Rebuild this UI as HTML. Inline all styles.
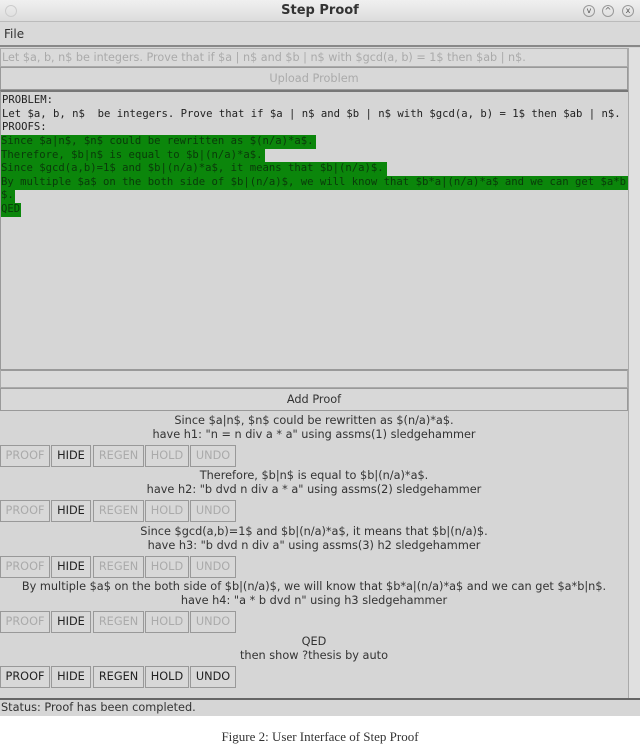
<!DOCTYPE html>
<html><head><style>
*{margin:0;padding:0;box-sizing:border-box}
body{width:640px;height:733px;background:#fff;position:relative;overflow:hidden;font-family:"DejaVu Sans","Liberation Sans",sans-serif;font-size:11.3px;color:#333}
.a{position:absolute}
.title{left:0;top:0;width:640px;height:22px;background:linear-gradient(#f0f0f0,#dcdcdc);border-bottom:1px solid #bbb;text-align:center;font-weight:bold;font-size:13px;line-height:22px;color:#333}
.menu{left:0;top:22px;width:640px;height:25px;background:#d9d9d9;border-bottom:2px solid #888;line-height:24px;padding-left:4px;font-size:12px}
.main{left:0;top:47px;width:640px;height:653px;background:#d6d6d6}
.field{left:0;height:19px;width:628px;border:1px solid #aaa;background:#dadada}
.btn{border:1px solid #999;background:#d8d8d8;text-align:center;color:#333}
.mono{font-family:"DejaVu Sans Mono","Liberation Mono",monospace;font-size:10.6px;line-height:13.5px;white-space:pre;color:#222;overflow:hidden}
.g{background:#0b860b;color:#0a3a0a}
.c{left:0;width:628px;text-align:center;line-height:14px;color:#333}
.bt{position:absolute;height:22px;border:1px solid #999;background:#d8d8d8;text-align:center;line-height:20px;color:#222}
.dis{color:#aaa}
.circ{width:12px;height:12px;border:1px solid #999;border-radius:50%;font-size:8px;line-height:10px;text-align:center;color:#555;top:5px}
</style></head><body>
<div class="a title">Step Proof</div>
<div class="a circ" style="left:5px;border-color:#ccc"></div>
<div class="a circ" style="left:583px">v</div>
<div class="a circ" style="left:602px">^</div>
<div class="a circ" style="left:622px">x</div>
<div class="a menu">File</div>
<div class="a main"></div>
<div class="a field" style="top:48px;color:#aaa;line-height:17px;padding-left:1px;font-size:11.2px;white-space:nowrap;overflow:hidden">Let $a, b, n$  be integers. Prove that if $a | n$ and $b | n$ with $gcd(a, b) = 1$ then $ab | n$.</div>
<div class="a btn dis" style="left:0;top:67px;width:628px;height:23px;line-height:21px">Upload Problem</div>
<div class="a" style="left:0;top:90px;width:628px;height:279px;border-top:2px solid #777;border-left:1px solid #999;background:#d6d6d6"></div>
<div class="a mono" style="left:2px;top:94px;width:626px">PROBLEM:
Let $a, b, n$  be integers. Prove that if $a | n$ and $b | n$ with $gcd(a, b) = 1$ then $ab | n$.
PROOFS:</div>
<div class="a mono g" style="left:1px;top:135px;width:315px">Since $a|n$, $n$ could be rewritten as $(n/a)*a$.</div>
<div class="a mono g" style="left:1px;top:149px;width:264px">Therefore, $b|n$ is equal to $b|(n/a)*a$.</div>
<div class="a mono g" style="left:1px;top:162px;width:386px">Since $gcd(a,b)=1$ and $b|(n/a)*a$, it means that $b|(n/a)$.</div>
<div class="a mono g" style="left:1px;top:176px;width:627px">By multiple $a$ on the both side of $b|(n/a)$, we will know that $b*a|(n/a)*a$ and we can get $a*b</div>
<div class="a mono g" style="left:1px;top:189px;width:14px">$.</div>
<div class="a mono g" style="left:1px;top:203px;width:20px">QED</div>
<div class="a field" style="top:369px;height:19px;border-top:2px solid #999"></div>
<div class="a btn" style="left:0;top:388px;width:628px;height:23px;line-height:21px">Add Proof</div>
<div class="a" style="left:628px;top:48px;width:12px;height:652px;background:#e0e0e0;border-left:1px solid #aaa"></div>

<div class="a c" style="top:414px">Since $a|n$, $n$ could be rewritten as $(n/a)*a$.<br>have h1: "n = n div a * a" using assms(1) sledgehammer</div>
<div class="a" style="top:445px;left:0;width:640px">
<div class="bt dis" style="left:0;width:50px">PROOF</div><div class="bt" style="left:51px;width:40px">HIDE</div><div class="bt dis" style="left:93px;width:51px">REGEN</div><div class="bt dis" style="left:145px;width:44px">HOLD</div><div class="bt dis" style="left:190px;width:46px">UNDO</div></div>

<div class="a c" style="top:469px">Therefore, $b|n$ is equal to $b|(n/a)*a$.<br>have h2: "b dvd n div a * a" using assms(2) sledgehammer</div>
<div class="a" style="top:500px;left:0;width:640px">
<div class="bt dis" style="left:0;width:50px">PROOF</div><div class="bt" style="left:51px;width:40px">HIDE</div><div class="bt dis" style="left:93px;width:51px">REGEN</div><div class="bt dis" style="left:145px;width:44px">HOLD</div><div class="bt dis" style="left:190px;width:46px">UNDO</div></div>

<div class="a c" style="top:525px">Since $gcd(a,b)=1$ and $b|(n/a)*a$, it means that $b|(n/a)$.<br>have h3: "b dvd n div a" using assms(3) h2 sledgehammer</div>
<div class="a" style="top:556px;left:0;width:640px">
<div class="bt dis" style="left:0;width:50px">PROOF</div><div class="bt" style="left:51px;width:40px">HIDE</div><div class="bt dis" style="left:93px;width:51px">REGEN</div><div class="bt dis" style="left:145px;width:44px">HOLD</div><div class="bt dis" style="left:190px;width:46px">UNDO</div></div>

<div class="a c" style="top:580px">By multiple $a$ on the both side of $b|(n/a)$, we will know that $b*a|(n/a)*a$ and we can get $a*b|n$.<br>have h4: "a * b dvd n" using h3 sledgehammer</div>
<div class="a" style="top:611px;left:0;width:640px">
<div class="bt dis" style="left:0;width:50px">PROOF</div><div class="bt" style="left:51px;width:40px">HIDE</div><div class="bt dis" style="left:93px;width:51px">REGEN</div><div class="bt dis" style="left:145px;width:44px">HOLD</div><div class="bt dis" style="left:190px;width:46px">UNDO</div></div>

<div class="a c" style="top:635px">QED<br>then show ?thesis by auto</div>
<div class="a" style="top:666px;left:0;width:640px">
<div class="bt" style="left:0;width:50px">PROOF</div><div class="bt" style="left:51px;width:40px">HIDE</div><div class="bt" style="left:93px;width:51px">REGEN</div><div class="bt" style="left:145px;width:44px">HOLD</div><div class="bt" style="left:190px;width:46px">UNDO</div></div>

<div class="a" style="left:0;top:698px;width:640px;height:18px;background:#d6d6d6;border-top:2px solid #666;line-height:16px;padding-left:1px;color:#333">Status: Proof has been completed.</div>
<div class="a" style="left:0;top:729px;width:640px;text-align:center;font-family:'Liberation Serif',serif;font-size:13px;color:#333">Figure 2: User Interface of Step Proof</div>
</body></html>
